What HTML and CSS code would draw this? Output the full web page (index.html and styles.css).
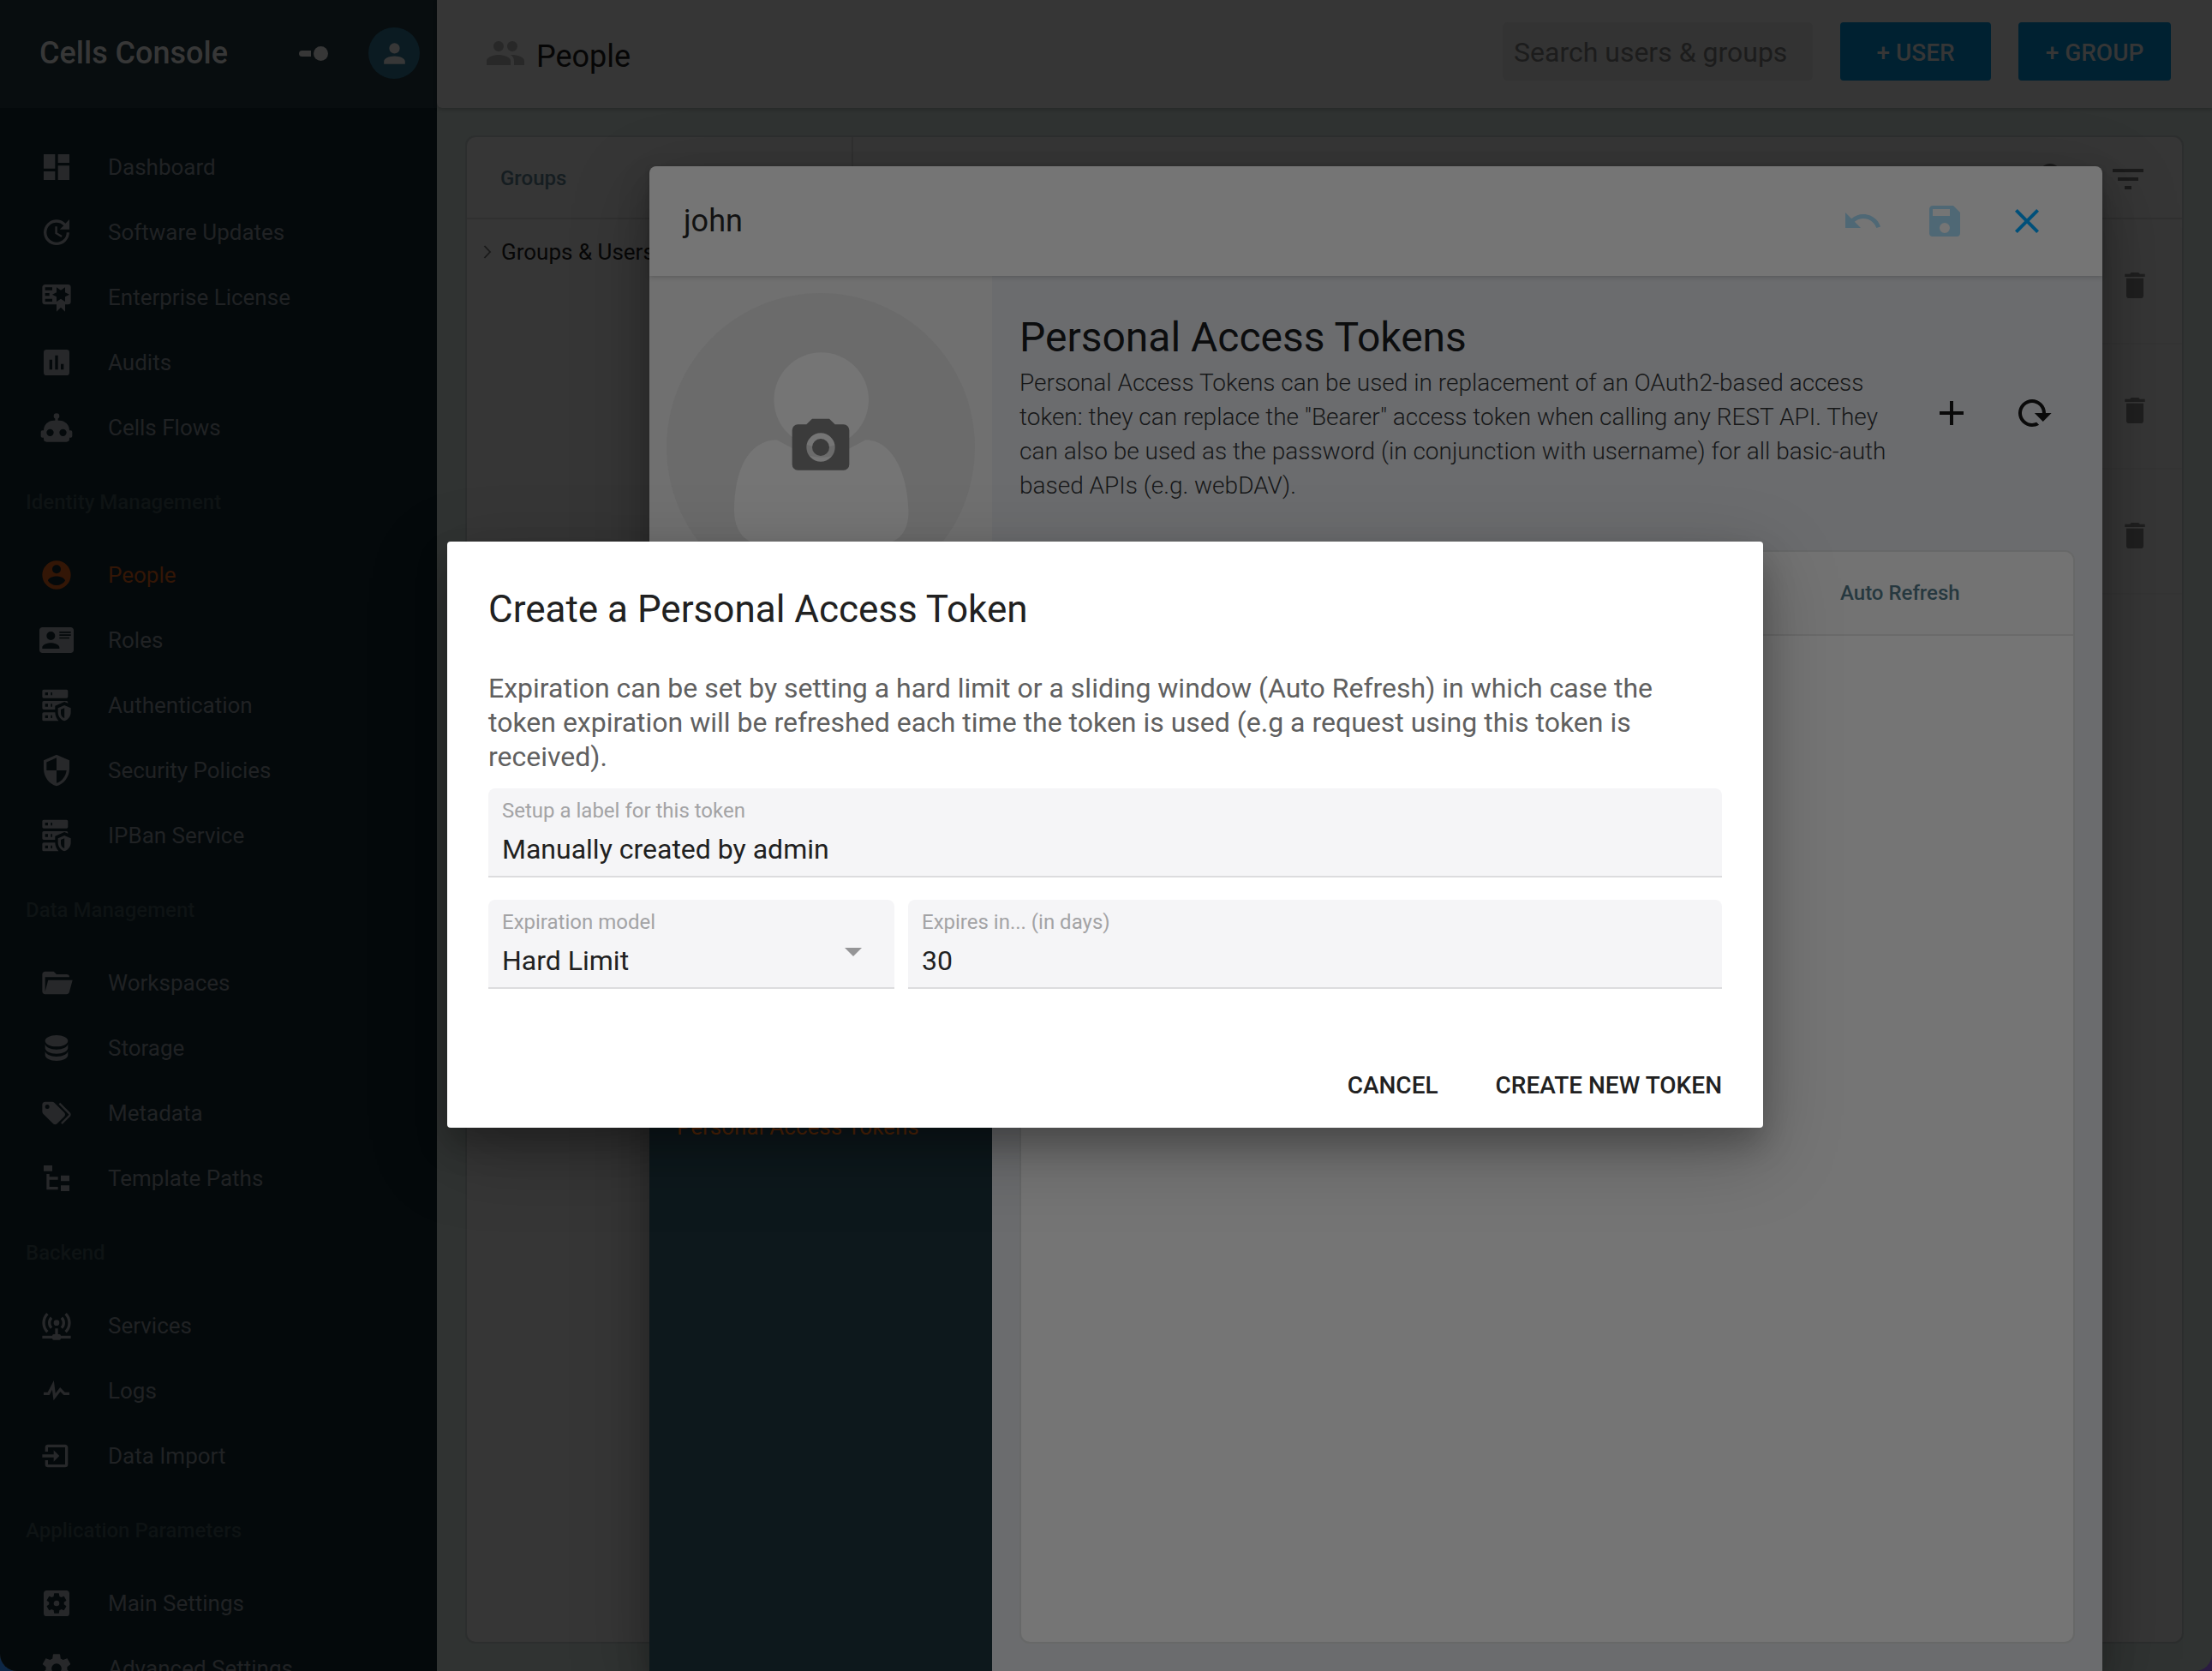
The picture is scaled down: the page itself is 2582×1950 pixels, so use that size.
FILE: index.html
```html
<!DOCTYPE html>
<html lang="en">
<head>
<meta charset="utf-8">
<title>Cells Console</title>
<link rel="stylesheet" href="styles.css">
</head>
<body>
<svg class="sprite" aria-hidden="true">
  <symbol id="i-dashboard" viewBox="0 0 24 24"><path d="M13,3V9H21V3M13,21H21V11H13M3,21H11V15H3M3,13H11V3H3V13Z"/></symbol>
  <symbol id="i-update" viewBox="0 0 24 24"><path d="M21,10.12H14.22L16.96,7.3C14.23,4.6 9.81,4.5 7.08,7.2C4.35,9.91 4.35,14.28 7.08,17C9.81,19.7 14.23,19.7 16.96,17C18.32,15.65 19,14.08 19,12.1H21C21,14.08 20.12,16.65 18.36,18.39C14.85,21.87 9.15,21.87 5.64,18.39C2.14,14.92 2.11,9.28 5.62,5.81C9.13,2.34 14.76,2.34 18.27,5.81L21,3V10.12M12.5,8V12.25L16,14.33L15.28,15.54L11,13V8H12.5Z"/></symbol>
  <symbol id="i-certificate" viewBox="0 0 24 24"><path d="M4,3C2.89,3 2,3.89 2,5V15A2,2 0 0,0 4,17H12V22L15,19L18,22V17H20A2,2 0 0,0 22,15V5A2,2 0 0,0 20,3H4M12,5L15,7L18,5V8.5L21,10L18,11.5V15L15,13L12,15V11.5L9,10L12,8.5V5M4,5H9V7H4V5M4,9H7V11H4V9M4,13H9V15H4V13Z"/></symbol>
  <symbol id="i-chart" viewBox="0 0 24 24"><path d="M17,17H15V13H17M13,17H11V7H13M9,17H7V10H9M19,3H5A2,2 0 0,0 3,5V19A2,2 0 0,0 5,21H19A2,2 0 0,0 21,19V5A2,2 0 0,0 19,3Z"/></symbol>
  <symbol id="i-robot" viewBox="0 0 24 24"><path d="M12,2A2,2 0 0,1 14,4C14,4.74 13.6,5.39 13,5.73V7H14A7,7 0 0,1 21,14H22A1,1 0 0,1 23,15V18A1,1 0 0,1 22,19H21V20A2,2 0 0,1 19,22H5A2,2 0 0,1 3,20V19H2A1,1 0 0,1 1,18V15A1,1 0 0,1 2,14H3A7,7 0 0,1 10,7H11V5.73C10.4,5.39 10,4.74 10,4A2,2 0 0,1 12,2M7.5,13A2.5,2.5 0 0,0 5,15.5A2.5,2.5 0 0,0 7.5,18A2.5,2.5 0 0,0 10,15.5A2.5,2.5 0 0,0 7.5,13M16.5,13A2.5,2.5 0 0,0 14,15.5A2.5,2.5 0 0,0 16.5,18A2.5,2.5 0 0,0 19,15.5A2.5,2.5 0 0,0 16.5,13Z"/></symbol>
  <symbol id="i-account-circle" viewBox="0 0 24 24"><path d="M12,19.2C9.5,19.2 7.29,17.92 6,16C6.03,14 10,12.9 12,12.9C14,12.9 17.97,14 18,16C16.71,17.92 14.5,19.2 12,19.2M12,5A3,3 0 0,1 15,8A3,3 0 0,1 12,11A3,3 0 0,1 9,8A3,3 0 0,1 12,5M12,2A10,10 0 0,0 2,12A10,10 0 0,0 12,22A10,10 0 0,0 22,12C22,6.47 17.5,2 12,2Z"/></symbol>
  <symbol id="i-card" viewBox="0 0 24 24"><path d="M2,3H22C23.05,3 24,3.95 24,5V19C24,20.05 23.05,21 22,21H2C0.95,21 0,20.05 0,19V5C0,3.95 0.95,3 2,3M14,6V7H22V6H14M14,8V9H22V8H14M14,10V11H21V10H14M8,13.91C6,13.91 2,15 2,17V18H14V17C14,15 10,13.91 8,13.91M8,6A3,3 0 0,0 5,9A3,3 0 0,0 8,12A3,3 0 0,0 11,9A3,3 0 0,0 8,6Z"/></symbol>
  <symbol id="i-server" viewBox="0 0 24 24"><path d="M3,1H19A1,1 0 0,1 20,2V6A1,1 0 0,1 19,7H3A1,1 0 0,1 2,6V2A1,1 0 0,1 3,1M3,9H19A1,1 0 0,1 20,10V10.67L17.5,9.56L11,12.44V15H3A1,1 0 0,1 2,14V10A1,1 0 0,1 3,9M3,17H11C11.06,19.25 12,21.4 13.46,23H3A1,1 0 0,1 2,22V18A1,1 0 0,1 3,17M8,5H9V3H8V5M8,13H9V11H8V13M8,21H9V19H8V21M4,3V5H6V3H4M4,11V13H6V11H4M4,19V21H6V19H4M17.5,12L22,14V17C22,19.78 20.08,22.37 17.5,23C14.92,22.37 13,19.78 13,17V14L17.5,12M17.5,13.94L15,15.06V17.72C15,19.26 16.07,20.7 17.5,21.06V13.94Z"/></symbol>
  <symbol id="i-shield" viewBox="0 0 24 24"><path d="M12,12H19C18.47,16.11 15.72,19.78 12,20.92V12H5V6.3L12,3.19M12,1L3,5V11C3,16.55 6.84,21.73 12,23C17.16,21.73 21,16.55 21,11V5L12,1Z"/></symbol>
  <symbol id="i-folder" viewBox="0 0 24 24"><path d="M19,20H4C2.89,20 2,19.1 2,18V6C2,4.89 2.89,4 4,4H10L12,6H19A2,2 0 0,1 21,8H4V18L6.14,10H23.21L20.93,18.5C20.7,19.37 19.92,20 19,20Z"/></symbol>
  <symbol id="i-database" viewBox="0 0 24 24"><path d="M12,3C7.58,3 4,4.79 4,7C4,9.21 7.58,11 12,11C16.42,11 20,9.21 20,7C20,4.79 16.42,3 12,3M4,9V12C4,14.21 7.58,16 12,16C16.42,16 20,14.21 20,12V9C20,11.21 16.42,13 12,13C7.58,13 4,11.21 4,9M4,14V17C4,19.21 7.58,21 12,21C16.42,21 20,19.21 20,17V14C20,16.21 16.42,18 12,18C7.58,18 4,16.21 4,14Z"/></symbol>
  <symbol id="i-tags" viewBox="0 0 24 24"><path d="M5.5,9A1.5,1.5 0 0,0 7,7.5A1.5,1.5 0 0,0 5.5,6A1.5,1.5 0 0,0 4,7.5A1.5,1.5 0 0,0 5.5,9M17.41,11.58C17.77,11.94 18,12.44 18,13C18,13.55 17.78,14.05 17.41,14.41L12.41,19.41C12.05,19.77 11.55,20 11,20C10.45,20 9.95,19.78 9.58,19.41L2.59,12.42C2.22,12.05 2,11.55 2,11V6C2,4.89 2.89,4 4,4H9C9.55,4 10.05,4.22 10.41,4.58L17.41,11.58M13.54,5.71L14.54,4.71L21.41,11.58C21.78,11.94 22,12.45 22,13C22,13.55 21.78,14.05 21.42,14.41L16.04,19.79L15.04,18.79L20.75,13L13.54,5.71Z"/></symbol>
  <symbol id="i-tree" viewBox="0 0 24 24"><path d="M3,3H9V7H3V3M15,10H21V14H15V10M15,17H21V21H15V17M13,13H7V18H13V20H5V9H7V11H13V13Z"/></symbol>
  <symbol id="i-access-point" viewBox="0 0 24 24"><path d="M4.93,2.93C3.12,4.74 2,7.24 2,10C2,12.76 3.12,15.26 4.93,17.07L6.34,15.66C4.89,14.22 4,12.22 4,10C4,7.79 4.89,5.78 6.34,4.34L4.93,2.93M19.07,2.93L17.66,4.34C19.11,5.78 20,7.79 20,10C20,12.22 19.11,14.22 17.66,15.66L19.07,17.07C20.88,15.26 22,12.76 22,10C22,7.24 20.88,4.74 19.07,2.93M7.76,5.76C6.67,6.85 6,8.35 6,10C6,11.65 6.67,13.15 7.76,14.24L9.17,12.83C8.45,12.11 8,11.11 8,10C8,8.89 8.45,7.89 9.17,7.17L7.76,5.76M16.24,5.76L14.83,7.17C15.55,7.89 16,8.89 16,10C16,11.11 15.55,12.11 14.83,12.83L16.24,14.24C17.33,13.15 18,11.65 18,10C18,8.35 17.33,6.85 16.24,5.76M12,8A2,2 0 0,0 10,10A2,2 0 0,0 12,12A2,2 0 0,0 14,10A2,2 0 0,0 12,8M11,14V18H10A1,1 0 0,0 9,19H2V21H9A1,1 0 0,0 10,22H14A1,1 0 0,0 15,21H22V19H15A1,1 0 0,0 14,18H13V14H11Z"/></symbol>
  <symbol id="i-pulse" viewBox="0 0 24 24"><path d="M3,13H5.79L10.1,4.79L11.28,13.75L14.5,9.66L17.83,13H21V15H17L14.67,12.67L9.92,18.73L8.94,11.31L7,15H3V13Z"/></symbol>
  <symbol id="i-import" viewBox="0 0 24 24"><path d="M14,12L10,8V11H2V13H10V16M20,18V6C20,4.89 19.1,4 18,4H6A2,2 0 0,0 4,6V9H6V6H18V18H6V15H4V18A2,2 0 0,0 6,20H18A2,2 0 0,0 20,18Z"/></symbol>
  <symbol id="i-settings-box" viewBox="0 0 24 24"><path d="M17.25,12C17.25,12.23 17.23,12.46 17.2,12.68L18.68,13.84C18.81,13.95 18.85,14.13 18.76,14.29L17.36,16.71C17.27,16.86 17.09,16.92 16.93,16.86L15.19,16.16C14.83,16.44 14.43,16.67 14,16.85L13.75,18.7C13.72,18.87 13.57,19 13.4,19H10.6C10.43,19 10.28,18.87 10.25,18.7L10,16.85C9.56,16.67 9.17,16.44 8.81,16.16L7.07,16.86C6.91,16.92 6.73,16.86 6.64,16.71L5.24,14.29C5.15,14.13 5.19,13.95 5.32,13.84L6.8,12.68C6.77,12.46 6.75,12.23 6.75,12C6.75,11.77 6.77,11.54 6.8,11.32L5.32,10.16C5.19,10.05 5.15,9.86 5.24,9.71L6.64,7.29C6.73,7.13 6.91,7.07 7.07,7.13L8.81,7.84C9.17,7.56 9.56,7.32 10,7.15L10.25,5.29C10.28,5.13 10.43,5 10.6,5H13.4C13.57,5 13.72,5.13 13.75,5.29L14,7.15C14.43,7.32 14.83,7.56 15.19,7.84L16.93,7.13C17.09,7.07 17.27,7.13 17.36,7.29L18.76,9.71C18.85,9.86 18.81,10.05 18.68,10.16L17.2,11.32C17.23,11.54 17.25,11.77 17.25,12M19,3H5C3.89,3 3,3.89 3,5V19A2,2 0 0,0 5,21H19A2,2 0 0,0 21,19V5C21,3.89 20.1,3 19,3M12,10C10.89,10 10,10.89 10,12A2,2 0 0,0 12,14A2,2 0 0,0 14,12A2,2 0 0,0 12,10Z"/></symbol>
  <symbol id="i-settings" viewBox="0 0 24 24"><path d="M12,15.5A3.5,3.5 0 0,1 8.5,12A3.5,3.5 0 0,1 12,8.5A3.5,3.5 0 0,1 15.5,12A3.5,3.5 0 0,1 12,15.5M19.43,12.97C19.47,12.65 19.5,12.33 19.5,12C19.5,11.67 19.47,11.34 19.43,11L21.54,9.37C21.73,9.22 21.78,8.95 21.66,8.73L19.66,5.27C19.54,5.05 19.27,4.96 19.05,5.05L16.56,6.05C16.04,5.66 15.5,5.32 14.87,5.07L14.5,2.42C14.46,2.18 14.25,2 14,2H10C9.75,2 9.54,2.18 9.5,2.42L9.13,5.07C8.5,5.32 7.96,5.66 7.44,6.05L4.95,5.05C4.73,4.96 4.46,5.05 4.34,5.27L2.34,8.73C2.21,8.95 2.27,9.22 2.46,9.37L4.57,11C4.53,11.34 4.5,11.67 4.5,12C4.5,12.33 4.53,12.65 4.57,12.97L2.46,14.63C2.27,14.78 2.21,15.05 2.34,15.27L4.34,18.73C4.46,18.95 4.73,19.03 4.95,18.95L7.44,17.94C7.96,18.34 8.5,18.68 9.13,18.93L9.5,21.58C9.54,21.82 9.75,22 10,22H14C14.25,22 14.46,21.82 14.5,21.58L14.87,18.93C15.5,18.67 16.04,18.34 16.56,17.94L19.05,18.95C19.27,19.03 19.54,18.95 19.66,18.73L21.66,15.27C21.78,15.05 21.73,14.78 21.54,14.63L19.43,12.97Z"/></symbol>
  <symbol id="i-people" viewBox="0 0 24 24"><path d="M16,13C15.71,13 15.38,13 15.03,13.05C16.19,13.89 17,15 17,16.5V19H23V16.5C23,14.17 18.33,13 16,13M8,13C5.67,13 1,14.17 1,16.5V19H15V16.5C15,14.17 10.33,13 8,13M8,11A3,3 0 0,0 11,8A3,3 0 0,0 8,5A3,3 0 0,0 5,8A3,3 0 0,0 8,11M16,11A3,3 0 0,0 19,8A3,3 0 0,0 16,5A3,3 0 0,0 13,8A3,3 0 0,0 16,11Z"/></symbol>
  <symbol id="i-account" viewBox="0 0 24 24"><path d="M12,4A4,4 0 0,1 16,8A4,4 0 0,1 12,12A4,4 0 0,1 8,8A4,4 0 0,1 12,4M12,14C16.42,14 20,15.79 20,18V20H4V18C4,15.79 7.58,14 12,14Z"/></symbol>
  <symbol id="i-undo" viewBox="0 0 24 24"><path d="M12.5,8C9.85,8 7.45,9 5.6,10.6L2,7V16H11L7.38,12.38C8.77,11.22 10.54,10.5 12.5,10.5C16.04,10.5 19.08,12.81 20.15,16L22.52,15.22C21.13,11.03 17.15,8 12.5,8Z"/></symbol>
  <symbol id="i-save" viewBox="0 0 24 24"><path d="M15,9H5V5H15M12,19A3,3 0 0,1 9,16A3,3 0 0,1 12,13A3,3 0 0,1 15,16A3,3 0 0,1 12,19M17,3H5C3.89,3 3,3.9 3,5V19A2,2 0 0,0 5,21H19A2,2 0 0,0 21,19V7L17,3Z"/></symbol>
  <symbol id="i-close" viewBox="0 0 24 24"><path d="M19,6.41L17.59,5L12,10.59L6.41,5L5,6.41L10.59,12L5,17.59L6.41,19L12,13.41L17.59,19L19,17.59L13.41,12L19,6.41Z"/></symbol>
  <symbol id="i-plus" viewBox="0 0 24 24"><path d="M19,13H13V19H11V13H5V11H11V5H13V11H19V13Z"/></symbol>
  <symbol id="i-reload" viewBox="0 0 24 24"><path d="M19,12H22.32L17.37,16.95L12.42,12H16.97C17,10.46 16.42,8.93 15.24,7.75C12.9,5.41 9.1,5.41 6.76,7.75C4.42,10.09 4.42,13.9 6.76,16.24C8.6,18.08 11.36,18.47 13.58,17.41L15.05,18.88C12,20.69 8,20.29 5.34,17.65C2.22,14.53 2.23,9.47 5.35,6.35C8.5,3.22 13.53,3.21 16.66,6.34C18.22,7.9 19,9.95 19,12Z"/></symbol>
  <symbol id="i-filter" viewBox="0 0 24 24"><path d="M6,13H18V11H6M3,6V8H21V6M10,18H14V16H10V18Z"/></symbol>
  <symbol id="i-search" viewBox="0 0 24 24"><path d="M9.5,3A6.5,6.5 0 0,1 16,9.5C16,11.11 15.41,12.59 14.44,13.73L14.71,14H15.5L20.5,19L19,20.5L14,15.5V14.71L13.73,14.44C12.59,15.41 11.11,16 9.5,16A6.5,6.5 0 0,1 3,9.5A6.5,6.5 0 0,1 9.5,3M9.5,5C7,5 5,7 5,9.5C5,12 7,14 9.5,14C12,14 14,12 14,9.5C14,7 12,5 9.5,5Z"/></symbol>
  <symbol id="i-delete" viewBox="0 0 24 24"><path d="M19,4H15.5L14.5,3H9.5L8.5,4H5V6H19M6,19A2,2 0 0,0 8,21H16A2,2 0 0,0 18,19V7H6V19Z"/></symbol>
  <symbol id="i-camera" viewBox="0 0 24 24"><path d="M4,4H7L9,2H15L17,4H20A2,2 0 0,1 22,6V18A2,2 0 0,1 20,20H4A2,2 0 0,1 2,18V6A2,2 0 0,1 4,4M12,7A5,5 0 0,0 7,12A5,5 0 0,0 12,17A5,5 0 0,0 17,12A5,5 0 0,0 12,7M12,9A3,3 0 0,1 15,12A3,3 0 0,1 12,15A3,3 0 0,1 9,12A3,3 0 0,1 12,9Z"/></symbol>
</svg>

<div class="app">
  <aside class="sidebar">
    <header class="brand">
      <span class="brand-name">Cells Console</span>
      <span class="toggle"><i class="toggle-bar"></i><i class="toggle-dot"></i></span>
      <span class="user-badge"><svg><use href="#i-account"/></svg></span>
    </header>
    <nav class="nav">
      <a class="nav-item"><svg><use href="#i-dashboard"/></svg>Dashboard</a>
      <a class="nav-item"><svg><use href="#i-update"/></svg>Software Updates</a>
      <a class="nav-item"><svg><use href="#i-certificate"/></svg>Enterprise License</a>
      <a class="nav-item"><svg><use href="#i-chart"/></svg>Audits</a>
      <a class="nav-item"><svg><use href="#i-robot"/></svg>Cells Flows</a>
      <h3 class="nav-section">Identity Management</h3>
      <a class="nav-item active"><svg><use href="#i-account-circle"/></svg>People</a>
      <a class="nav-item"><svg><use href="#i-card"/></svg>Roles</a>
      <a class="nav-item"><svg><use href="#i-server"/></svg>Authentication</a>
      <a class="nav-item"><svg><use href="#i-shield"/></svg>Security Policies</a>
      <a class="nav-item"><svg><use href="#i-server"/></svg>IPBan Service</a>
      <h3 class="nav-section">Data Management</h3>
      <a class="nav-item"><svg><use href="#i-folder"/></svg>Workspaces</a>
      <a class="nav-item"><svg><use href="#i-database"/></svg>Storage</a>
      <a class="nav-item"><svg><use href="#i-tags"/></svg>Metadata</a>
      <a class="nav-item"><svg><use href="#i-tree"/></svg>Template Paths</a>
      <h3 class="nav-section">Backend</h3>
      <a class="nav-item"><svg><use href="#i-access-point"/></svg>Services</a>
      <a class="nav-item"><svg><use href="#i-pulse"/></svg>Logs</a>
      <a class="nav-item"><svg><use href="#i-import"/></svg>Data Import</a>
      <h3 class="nav-section">Application Parameters</h3>
      <a class="nav-item"><svg><use href="#i-settings-box"/></svg>Main Settings</a>
      <a class="nav-item"><svg><use href="#i-settings"/></svg>Advanced Settings</a>
    </nav>
  </aside>

  <main class="main">
    <header class="topbar">
      <svg class="topbar-icon"><use href="#i-people"/></svg>
      <h1 class="topbar-title">People</h1>
      <span class="search">Search users &amp; groups</span>
      <button class="btn btn-user">+ USER</button>
      <button class="btn btn-group">+ GROUP</button>
    </header>
    <section class="board">
      <div class="groups">
        <div class="groups-head">Groups</div>
        <div class="tree-row"><svg class="chevron" viewBox="0 0 10 16"><path d="M1.5 1L8 8L1.5 15"/></svg>Groups &amp; Users</div>
      </div>
      <div class="list">
        <div class="list-head"><svg><use href="#i-search"/></svg><svg><use href="#i-filter"/></svg></div>
        <div class="list-row"><svg><use href="#i-delete"/></svg></div>
        <div class="list-row"><svg><use href="#i-delete"/></svg></div>
        <div class="list-row"><svg><use href="#i-delete"/></svg></div>
      </div>
    </section>
  </main>

  <section class="editor">
    <header class="editor-head">
      <h2 class="editor-title">john</h2>
      <svg class="faded"><use href="#i-undo"/></svg>
      <svg class="faded"><use href="#i-save"/></svg>
      <svg><use href="#i-close"/></svg>
    </header>
    <div class="editor-body">
      <aside class="profile">
        <div class="avatar-zone">
          <svg class="avatar" viewBox="0 0 360 360">
            <circle class="disc" cx="180" cy="180" r="180"/>
            <path class="figure" d="M128.500 171.300C95 172 79 208 79 254C79 276 91 292 108 292H253C272 292 283 276 282.500 254C281 208 263 172 232.500 171.300L212 182Q181 202 147 181Z"/>
            <circle class="figure" cx="180.700" cy="124.500" r="55.300"/>
          </svg>
          <svg class="camera"><use href="#i-camera"/></svg>
        </div>
        <div class="profile-menu"><span class="menu-active">Personal Access Tokens</span></div>
      </aside>
      <div class="tokens">
        <header class="tokens-head">
          <div class="tokens-text">
            <h2>Personal Access Tokens</h2>
            <p>Personal Access Tokens can be used in replacement of an OAuth2-based access<br>token: they can replace the "Bearer" access token when calling any REST API. They<br>can also be used as the password (in conjunction with username) for all basic-auth<br>based APIs (e.g. webDAV).</p>
          </div>
          <svg class="ico-plus"><use href="#i-plus"/></svg>
          <svg class="ico-reload"><use href="#i-reload"/></svg>
        </header>
        <div class="table">
          <div class="table-head"><span>Auto Refresh</span></div>
        </div>
      </div>
    </div>
  </section>

  <section class="modal">
    <h2 class="modal-title">Create a Personal Access Token</h2>
    <p class="modal-text">Expiration can be set by setting a hard limit or a sliding window (Auto Refresh) in which case the<br>token expiration will be refreshed each time the token is used (e.g a request using this token is<br>received).</p>
    <div class="fields">
      <div class="field"><label>Setup a label for this token</label><span>Manually created by admin</span></div>
      <div class="field-row">
        <div class="field select"><label>Expiration model</label><span>Hard Limit</span></div>
        <div class="field grow"><label>Expires in... (in days)</label><span>30</span></div>
      </div>
    </div>
    <footer class="modal-actions"><button>CANCEL</button><button>CREATE NEW TOKEN</button></footer>
  </section>
</div>
</body>
</html>
```
FILE: styles.css
```css
* { box-sizing: border-box; margin: 0; padding: 0; }

body {
  width: 2582px;
  height: 1950px;
  overflow: hidden;
  background: linear-gradient(90deg, #0d2746 50%, #2b1b42 50%);
  font-family: Roboto, "Liberation Sans", sans-serif;
  font-size: 26px;
}

h1, h2, h3 { font-weight: 400; }
svg { display: block; flex: none; fill: currentColor; fill-rule: evenodd; }
button { border: 0; background: none; font: inherit; color: inherit; }
.sprite { display: none; }

.app {
  position: relative;
  display: flex;
  width: 2582px;
  height: 1950px;
  overflow: hidden;
  border-radius: 0 0 20px 20px;
  background: #303332;
}

/* Sidebar */
.sidebar { width: 510px; flex: none; background: #04090b; }

.brand {
  display: flex;
  align-items: center;
  height: 126px;
  padding: 0 20px 2px 46px;
  background: #080d0f;
  color: #373737;
}
.brand-name { flex: 1; font-size: 36px; font-weight: 500; line-height: 44px; }
.toggle { display: flex; align-items: center; gap: 3px; margin-right: 47px; }
.toggle-bar { width: 14px; height: 7px; border-radius: 4px 0 0 4px; background: currentColor; }
.toggle-dot { width: 17px; height: 17px; border-radius: 50%; background: currentColor; }
.user-badge {
  display: flex;
  align-items: center;
  justify-content: center;
  width: 60px;
  height: 60px;
  border-radius: 50%;
  background: #0b1b22;
}
.user-badge svg { width: 37px; height: 37px; }

.nav { padding-top: 31px; }
.nav-item {
  display: flex;
  align-items: center;
  gap: 40px;
  height: 76px;
  padding-left: 46px;
  color: #202224;
}
.nav-item svg { width: 40px; height: 40px; color: #27282a; }
.nav-item.active, .nav-item.active svg { color: #331606; }
.nav-section {
  height: 96px;
  padding-left: 30px;
  font-size: 24px;
  font-weight: 500;
  line-height: 98px;
  color: #0e1314;
}

/* Main column */
.main { display: flex; flex-direction: column; flex: 1; }
.topbar {
  display: flex;
  align-items: center;
  height: 126px;
  padding: 0 48px 6px 56px;
  border-radius: 0 0 0 6px;
  background: #363636;
  box-shadow: 0 2px 4px rgba(0, 0, 0, .2);
}
.topbar-icon { width: 48px; height: 48px; margin-top: 4px; color: #282828; }
.topbar-title { flex: 1; margin: 12px 0 0 12px; font-size: 36px; line-height: 44px; color: #060606; }
.search {
  width: 362px;
  height: 68px;
  margin-right: 32px;
  padding-left: 13px;
  border-radius: 6px;
  background: #333;
  font-size: 32px;
  line-height: 70px;
  color: #1c1c1c;
}
.btn { height: 68px; padding-top: 2px; border-radius: 4px; background: #002131; font-size: 28px; font-weight: 500; color: #363636; }
.btn-user { width: 176px; margin-right: 32px; }
.btn-group { width: 178px; }

.board {
  display: flex;
  flex: 1;
  margin: 32px 33px 32px 33px;
  border: 2px solid #2c2e2e;
  border-radius: 12px;
  background: #363636;
}
.groups { width: 451px; border-right: 2px solid #303030; }
.groups-head {
  height: 96px;
  padding-left: 39px;
  border-bottom: 2px solid #303030;
  font-size: 24px;
  font-weight: 500;
  line-height: 97px;
  color: #151d21;
}
.tree-row { display: flex; align-items: center; gap: 11px; height: 75px; padding-left: 19px; color: #070707; }
.chevron { width: 10px; height: 16px; fill: none; stroke: #1a1a1a; stroke-width: 1.8; }
.list { flex: 1; }
.list-head {
  display: flex;
  align-items: center;
  justify-content: flex-end;
  gap: 38px;
  height: 96px;
  padding: 3px 39px 0 0;
  border-bottom: 2px solid #303030;
  color: #1b1b1b;
}
.list-head svg { width: 48px; height: 48px; }
.list-row {
  display: flex;
  align-items: center;
  justify-content: flex-end;
  height: 146px;
  padding: 10px 35px 0 0;
  border-bottom: 2px solid #343434;
  color: #1f1f1f;
}
.list-row svg { width: 40px; height: 40px; }

/* User editor sheet */
.editor {
  position: absolute;
  left: 758px;
  top: 194px;
  display: flex;
  flex-direction: column;
  width: 1696px;
  height: 1756px;
  border-radius: 8px 8px 0 0;
  background: #757575;
  box-shadow: 0 28px 90px rgba(0, 0, 0, .25), 0 20px 36px rgba(0, 0, 0, .22);
}
.editor-head {
  position: relative;
  display: flex;
  align-items: center;
  gap: 48px;
  height: 128px;
  padding: 0 64px 0 40px;
  color: #00507a;
  box-shadow: 0 2px 5px rgba(0, 0, 0, .16);
}
.editor-head svg { width: 48px; height: 48px; }
.editor-head .faded { color: #4f6875; }
.editor-title { flex: 1; font-size: 36px; line-height: 44px; color: #121212; }
.editor-body { display: flex; flex: 1; }
.profile { display: flex; flex-direction: column; width: 400px; background: #707070; }
.avatar-zone { position: relative; height: 400px; padding: 20px; }
.avatar { width: 360px; height: 360px; }
.disc { fill: #6b6b6b; }
.figure { fill: #757575; }
.camera { position: absolute; left: 160px; top: 160px; width: 80px; height: 80px; color: #3b3b3b; }
.profile-menu { display: flex; flex: 1; padding: 575px 0 0 32px; background: #0d181c; }
.menu-active { line-height: 36px; color: #572708; }

.tokens { display: flex; flex: 1; flex-direction: column; padding: 44px 32px 32px; background: #6b6c6e; }
.tokens-head { display: flex; height: 276px; }
.tokens-text { width: 1064px; color: #0c0d0e; }
.tokens-text h2 { font-size: 48px; line-height: 56px; }
.tokens-text p { margin-top: 5px; font-size: 28px; font-weight: 300; line-height: 40px; white-space: nowrap; color: #161718; }
.ico-plus { width: 48px; height: 48px; margin-top: 92px; color: #0a0a0a; }
.ico-reload { width: 48px; height: 48px; margin: 92px 0 0 48px; color: #0a0a0a; }
.table { flex: 1; border: 2px solid #676868; border-radius: 12px; background: #757575; }
.table-head {
  height: 98px;
  padding-left: 956px;
  border-bottom: 2px solid #6a6a6a;
  border-radius: 10px 10px 0 0;
  background: #737373;
  font-size: 24px;
  font-weight: 500;
  line-height: 96px;
  color: #26383f;
}

/* Token creation modal */
.modal {
  position: absolute;
  left: 522px;
  top: 632px;
  width: 1536px;
  height: 684px;
  padding: 53px 48px 32px;
  border-radius: 4px;
  background: #fff;
  box-shadow: 0 28px 90px rgba(0, 0, 0, .25), 0 20px 36px rgba(0, 0, 0, .22);
  color: #212121;
}
.modal-title { font-size: 44px; line-height: 52px; }
.modal-text { margin-top: 46px; font-size: 32px; line-height: 40px; white-space: nowrap; color: #606060; }
.fields { display: flex; flex-direction: column; gap: 26px; margin-top: 17px; }
.field-row { display: flex; gap: 16px; }
.field {
  position: relative;
  display: flex;
  flex-direction: column;
  gap: 11px;
  height: 104px;
  padding: 12px 16px 0;
  border-bottom: 2px solid #dcdcde;
  border-radius: 8px 8px 0 0;
  background: #f5f5f7;
}
.field label { font-size: 24px; line-height: 28px; color: #a3a3a5; }
.field span { font-size: 32px; line-height: 40px; }
.select { width: 474px; }
.select::after {
  content: "";
  position: absolute;
  right: 38px;
  top: 56px;
  border: 10px solid transparent;
  border-top-color: #959597;
  border-bottom: 0;
}
.grow { flex: 1; }
.modal-actions {
  display: flex;
  justify-content: flex-end;
  gap: 67px;
  margin-top: 95px;
  font-size: 28px;
  font-weight: 500;
  line-height: 36px;
}
```
